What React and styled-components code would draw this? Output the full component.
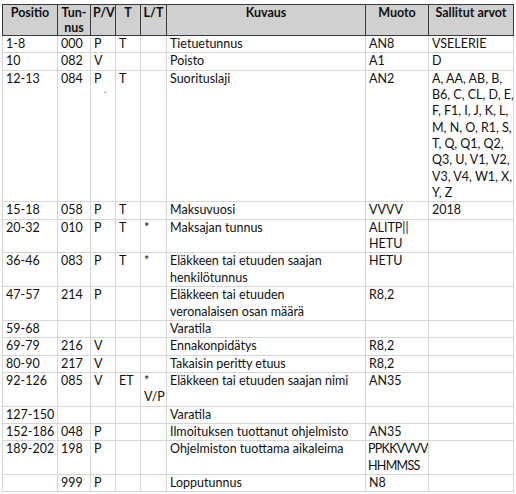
import React from "react";
import { styled, createGlobalStyle } from "styled-components";

/*          STYLES          */
const GlobalStyle = createGlobalStyle`
html, body {
  margin: 0;
  padding: 0;
  background: #ffffff;
}
body {
  font-family: Lato, "Liberation Sans", sans-serif;
  color: #111111;
}
`
const Sheet = styled.div`
padding: 4px 3px 0 2px;
`
const Table = styled.table`
border-collapse: collapse;
table-layout: fixed;
width: 511px;
font-size: 12.5px;
`
const HeadCell = styled.th`
background-color: #d0d0d0;
border: 1px solid #3a3a3a;
font-weight: bold;
text-align: center;
vertical-align: top;
line-height: 15px;
padding: 0 2px;
white-space: nowrap;
`
const Cell = styled.td`
border: 1px solid #d6d6d6;
vertical-align: top;
line-height: 16.35px;
padding: ${props => props.$tight ? "0 0 0 2px" : "0 3px"};
letter-spacing: ${props => props.$tight ? "-0.7px" : "normal"};
white-space: nowrap;
overflow: hidden;
`
const Dot = styled.span`
display: block;
color: #2a4fd0;
font-size: 10px;
line-height: 4px;
padding-left: 10px;
`

/*          DATA          */
const widths = [55, 33, 25, 25, 26, 199, 63, 85];
const heads = ["Positio", ["Tun-", "nus"], "P/V", "T", "L/T", "Kuvaus", "Muoto", "Sallitut arvot"];

const rows = [
  ["1-8", "000", "P", "T", "", "Tietuetunnus", "AN8", "VSELERIE"],
  ["10", "082", "V", "", "", "Poisto", "A1", "D"],
  ["12-13", "084", "P", "T", "", "Suorituslaji", "AN2",
    ["A, AA, AB, B,", "B6, C, CL, D, E,", "F, F1, I, J, K, L,", "M, N, O, R1, S,", "T, Q, Q1, Q2,", "Q3, U, V1, V2,", "V3, V4,  W1, X,", "Y, Z"]],
  ["15-18", "058", "P", "T", "", "Maksuvuosi", "VVVV", "2018"],
  ["20-32", "010", "P", "T", "*", "Maksajan tunnus", ["ALITP||", "HETU"], ""],
  ["36-46", "083", "P", "T", "*", ["Eläkkeen tai etuuden saajan", "henkilötunnus"], "HETU", ""],
  ["47-57", "214", "P", "", "", ["Eläkkeen tai etuuden", "veronalaisen osan määrä"], "R8,2", ""],
  ["59-68", "", "", "", "", "Varatila", "", ""],
  ["69-79", "216", "V", "", "", "Ennakonpidätys", "R8,2", ""],
  ["80-90", "217", "V", "", "", "Takaisin peritty etuus", "R8,2", ""],
  ["92-126", "085", "V", "ET", ["*", "V/P"], "Eläkkeen tai etuuden saajan nimi", "AN35", ""],
  ["127-150", "", "", "", "", "Varatila", "", ""],
  ["152-186", "048", "P", "", "", "Ilmoituksen tuottanut ohjelmisto", "AN35", ""],
  ["189-202", "198", "P", "", "", "Ohjelmiston tuottama aikaleima", ["PPKKVVVV", "HHMMSS"], ""],
  ["", "999", "P", "", "", "Lopputunnus", "N8", ""],
];

/*          COMPONENTS          */
function Lines({value}){
    if (!Array.isArray(value)) return value;
    return value.map((line, i) => (
        <React.Fragment key={i}>
            {i > 0 && <br/>}
            {line}
        </React.Fragment>
    ));
}

function App(){
    return(
        <Sheet>
            <GlobalStyle/>
            <Table>
                <colgroup>
                    {widths.map((w, i) => <col key={i} style={{width: w}}/>)}
                </colgroup>
                <thead>
                    <tr>
                        {heads.map((h, i) => (
                            <HeadCell key={i}><Lines value={h}/></HeadCell>
                        ))}
                    </tr>
                </thead>
                <tbody>
                    {rows.map((row, r) => (
                        <tr key={r}>
                            {row.map((c, i) => (
                                <Cell key={i} $tight={i === 6 && Array.isArray(c) && c[0].length > 7}>
                                    <Lines value={c}/>
                                    {r === 2 && i === 2 && <Dot>.</Dot>}
                                </Cell>
                            ))}
                        </tr>
                    ))}
                </tbody>
            </Table>
        </Sheet>
    );
}

export default App;
